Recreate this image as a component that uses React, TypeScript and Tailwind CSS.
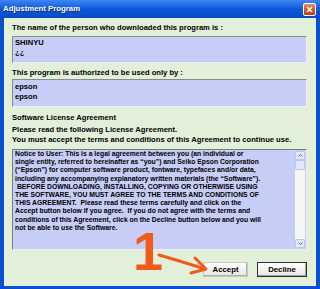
import React from "react";

const licenseLines = [
  "Notice to User: This is a legal agreement between you (an individual or",
  "single entity, referred to hereinafter as \u201Cyou\u201D) and Seiko Epson Corporation",
  "(\u201CEpson\u201D) for computer software product, fontware, typefaces and/or data,",
  "including any accompanying explanatory written materials (the \u201CSoftware\u201D).",
  "\u00A0BEFORE DOWNLOADING, INSTALLING, COPYING OR OTHERWISE USING",
  "THE SOFTWARE, YOU MUST AGREE TO THE TERMS AND CONDITIONS OF",
  "THIS AGREEMENT.\u00A0 Please read these terms carefully and click on the",
  "Accept button below if you agree.\u00A0 If you do not agree with the terms and",
  "conditions of this Agreement, click on the Decline button below and you will",
  "not be able to use the Software.",
];

function CloseButton() {
  return (
    <div className="flex h-[13px] w-[13px] items-center justify-center rounded-[2px] border border-white bg-gradient-to-b from-[#ec8a6a] via-[#d9532e] to-[#c23c18]">
      <svg width="7" height="7" viewBox="0 0 7 7">
        <path d="M1 1 L6 6 M6 1 L1 6" stroke="white" strokeWidth="1.6" />
      </svg>
    </div>
  );
}

function ScrollArrow({ up }: { up: boolean }) {
  return (
    <div className="flex h-[9px] w-[10px] items-center justify-center rounded-[1px] border border-[#b9c8ee] bg-[#e4ebfb]">
      <svg width="5" height="3" viewBox="0 0 5 3">
        <path
          d={up ? "M0.5 2.5 L2.5 0.5 L4.5 2.5" : "M0.5 0.5 L2.5 2.5 L4.5 0.5"}
          stroke="#4d6185"
          strokeWidth="1"
          fill="none"
        />
      </svg>
    </div>
  );
}

function DialogButton({ label, isDefault }: { label: string; isDefault?: boolean }) {
  return (
    <button
      className={
        "flex h-[15px] items-center justify-center border bg-gradient-to-b from-white to-[#e6e6e0] text-[7.8px] font-bold text-black " +
        (isDefault
          ? "w-[50px] border-[#303030] shadow-[inset_-1px_-1px_0_#a0a0a0]"
          : "w-[45px] border-[#c8c8c0] shadow-[inset_-1px_-1px_0_#b0b0a8]")
      }
    >
      {label}
    </button>
  );
}

export default function App() {
  return (
    <div className="relative flex h-[289px] w-[320px] flex-col overflow-hidden bg-[#0a4fd0] font-['Liberation_Sans',Arial,sans-serif] text-black">
      <div className="flex h-[18px] shrink-0 items-center justify-between bg-gradient-to-b from-[#3d86f2] via-[#0c58db] to-[#0a49c4] pl-[3px] pr-[4px]">
        <span className="text-[7.8px] font-bold text-white [text-shadow:1px_1px_0_#0a2f80]">
          Adjustment Program
        </span>
        <CloseButton />
      </div>

      <div className="mx-[4px] mb-[3px] flex flex-1 flex-col bg-[#e2f0da] pl-[8px] pr-[9px] text-[7.6px] font-bold leading-[10px]">
        <p className="mt-[5px]">The name of the person who downloaded this program is :</p>
        <div className="mt-[3px] h-[27px] border border-t-[#8a8a8a] border-l-[#8a8a8a] border-b-[#e8eefc] border-r-[#e8eefc] bg-[#c6cdf7] px-[2px] pt-[1px]">
          <p>SHINYU</p>
          <p>¿¿</p>
        </div>

        <p className="mt-[5px]">This program is authorized to be used only by :</p>
        <div className="mt-[1px] h-[28px] border border-t-[#8a8a8a] border-l-[#8a8a8a] border-b-[#e8eefc] border-r-[#e8eefc] bg-[#c6cdf7] px-[2px] pt-[2px]">
          <p>epson</p>
          <p>epson</p>
        </div>

        <p className="mt-[6px]">Software License Agreement</p>
        <p className="mt-[2px]">Please read the following License Agreement.</p>
        <p>You must accept the terms and conditions of this Agreement to continue use.</p>

        <div className="mt-[4px] flex h-[101px] border border-t-[#7a7a7a] border-l-[#7a7a7a] border-b-[#e8eefc] border-r-[#e8eefc] bg-[#c6cdf7]">
          <div className="flex-1 pl-[2px] text-[6.8px] leading-[8.2px]">
            {licenseLines.map((line) => (
              <p key={line} className="whitespace-pre">
                {line}
              </p>
            ))}
          </div>
          <div className="my-[1px] mr-[1px] flex w-[10px] flex-col justify-between bg-[#f6f6f2]">
            <div className="flex flex-col">
              <ScrollArrow up />
              <div className="h-[10px] w-[10px] rounded-[1px] border border-[#b9c8ee] bg-[#dfe7fa]" />
            </div>
            <ScrollArrow up={false} />
          </div>
        </div>

        <div className="mt-[12px] flex justify-end gap-[9px]">
          <DialogButton label="Accept" />
          <DialogButton label="Decline" isDefault />
        </div>
      </div>

      <span className="absolute left-[133px] top-[224px] text-[54px] font-bold leading-none text-[#f25a1c]">
        1
      </span>
      <svg className="absolute left-[155px] top-[250px]" width="56" height="28" viewBox="0 0 56 28">
        <path d="M4 5 Q25 11 50 19" stroke="#f25a1c" strokeWidth="3" fill="none" strokeLinecap="round" />
        <path d="M40 8 L51 19 L36 23" stroke="#f25a1c" strokeWidth="3" fill="none" strokeLinecap="round" strokeLinejoin="round" />
      </svg>
    </div>
  );
}
